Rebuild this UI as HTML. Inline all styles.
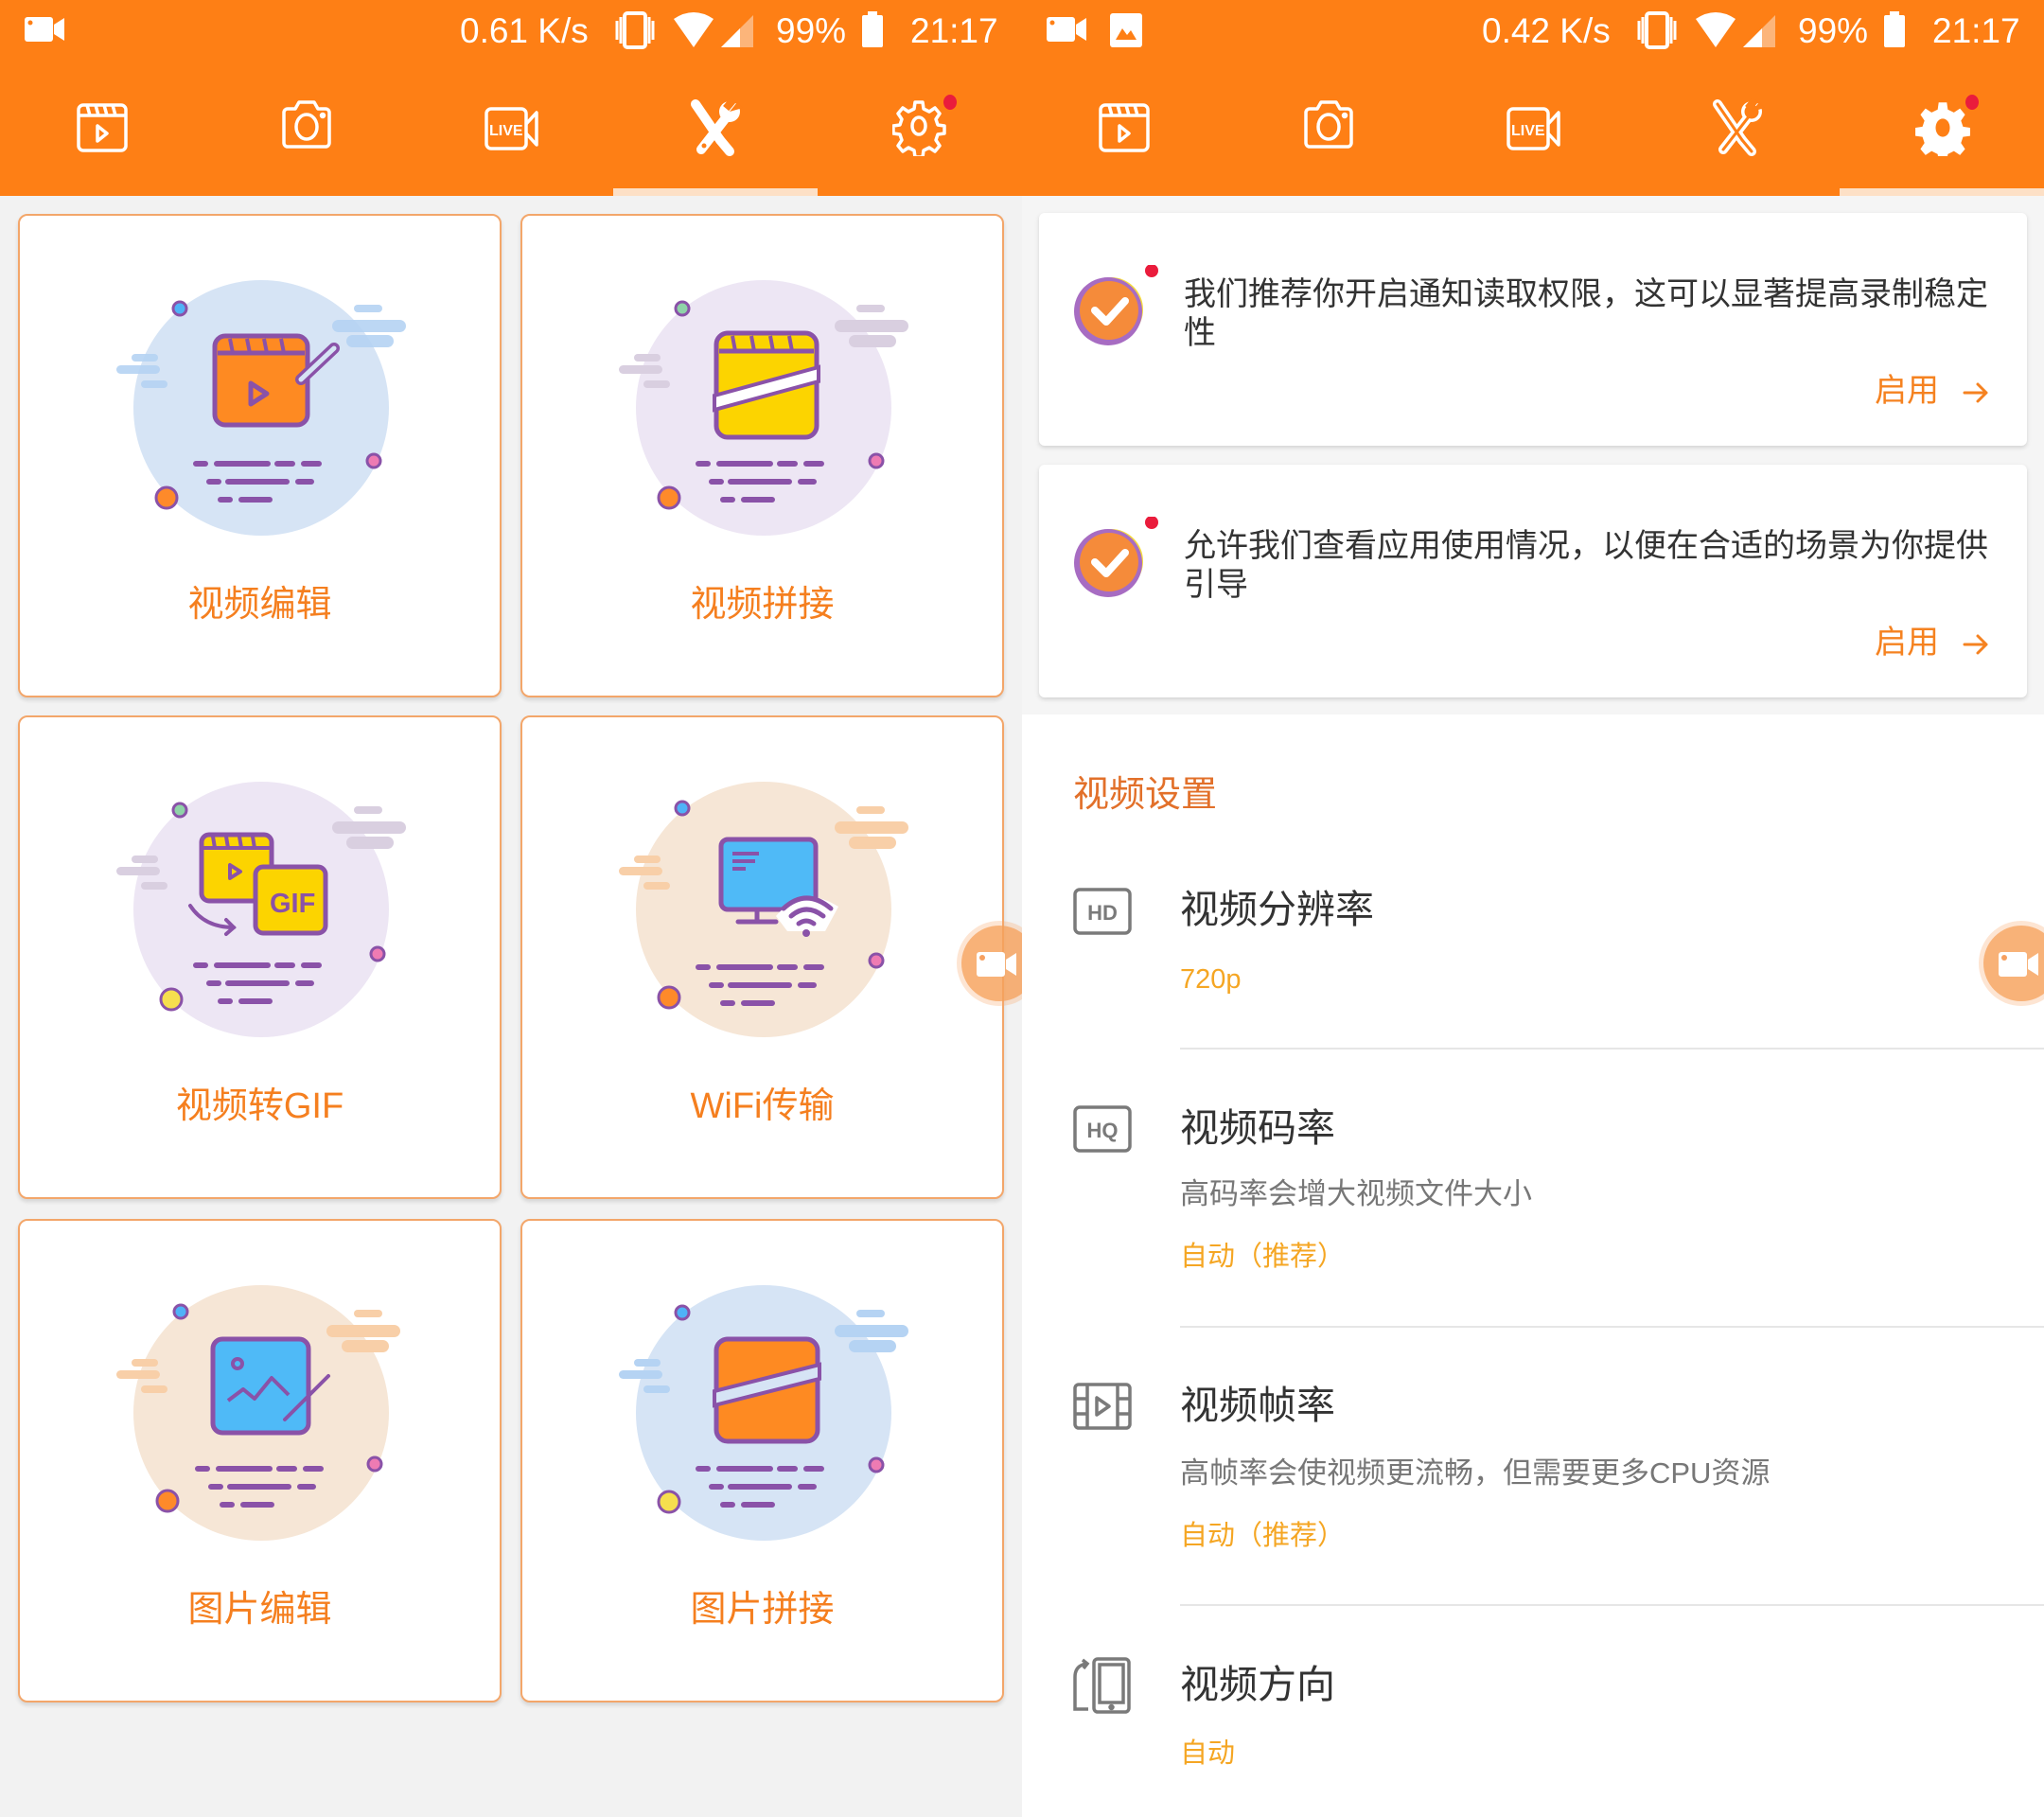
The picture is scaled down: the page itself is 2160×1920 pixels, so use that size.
<!DOCTYPE html>
<html><head><meta charset="utf-8">
<style>
*{margin:0;padding:0;box-sizing:border-box}
body{width:2160px;height:1920px;position:relative;overflow:hidden;background:#f2f2f2;font-family:"Liberation Sans","Noto Sans CJK SC",sans-serif}
.abs{position:absolute}
.hdr{position:absolute;top:0;height:207px;background:#fe7f15;width:1080px}
.st{position:absolute;top:10px;color:#fff;font-size:37px;line-height:46px;white-space:nowrap}
.ind{position:absolute;top:199px;height:8px;width:216px;background:#fde0c6}
.card{position:absolute;width:511px;height:511px;background:#fff;border:2px solid #f3a66a;border-radius:10px;box-shadow:0 3px 4px rgba(0,0,0,.12)}
.card svg{position:absolute;left:0;top:0}
.lbl{position:absolute;left:0;right:0;top:386px;text-align:center;color:#f57f1f;font-size:38px;line-height:50px}
.pc{position:absolute;left:1098px;width:1044px;height:246px;background:#fff;border-radius:6px;box-shadow:0 2px 5px rgba(0,0,0,.15)}
.pt{position:absolute;left:153px;top:66px;width:870px;color:#333;font-size:34px;line-height:41px}
.en{position:absolute;left:883px;top:166px;color:#f58220;font-size:34px;line-height:44px}
.ttl{position:absolute;left:1247px;color:#333;font-size:41px;line-height:50px}
.sub{position:absolute;left:1247px;color:#777;font-size:31px;line-height:40px}
.val{position:absolute;left:1247px;color:#f5a623;font-size:29px;line-height:38px}
.dv{position:absolute;left:1247px;right:0;height:2px;background:#e6e6e6}
</style></head><body>

<div class="hdr" style="left:0"></div>
<div class="hdr" style="left:1080px"></div>

<svg class="abs" style="left:26px;top:16px" width="44" height="30" viewBox="0 0 44 30"><rect x="0" y="2" width="30" height="26" rx="3" fill="#fff"/><path d="M31 10 L42 3 V27 L31 20Z" fill="#fff"/><circle cx="6" cy="8" r="2.5" fill="#fe7f15"/></svg>
<div class="st" style="left:486px">0.61 K/s</div>
<svg class="abs" style="left:648px;top:12px" width="50" height="40" viewBox="0 0 50 40"><rect x="12" y="2" width="22" height="36" rx="3" fill="none" stroke="#fff" stroke-width="4"/><path d="M4 10v20M8 6v28M38 6v28M42 10v20" stroke="#fff" stroke-width="3"/></svg>
<svg class="abs" style="left:710px;top:12px" width="90" height="40" viewBox="0 0 90 40"><path d="M2 8 Q23 -6 44 8 L23 38Z" fill="#fff"/><path d="M52 38 L86 4 V38Z" fill="#fcb57a"/><path d="M52 38 L72 18 V38Z" fill="#fff"/></svg>
<div class="st" style="left:820px">99%</div>
<svg class="abs" style="left:910px;top:12px" width="24" height="38" viewBox="0 0 24 38"><rect x="7" y="0" width="10" height="4" fill="#fff"/><rect x="1" y="4" width="22" height="34" rx="2" fill="#fff"/></svg>
<div class="st" style="left:962px">21:17</div>

<svg class="abs" style="left:1106px;top:16px" width="44" height="30" viewBox="0 0 44 30"><rect x="0" y="2" width="30" height="26" rx="3" fill="#fff"/><path d="M31 10 L42 3 V27 L31 20Z" fill="#fff"/><circle cx="6" cy="8" r="2.5" fill="#fe7f15"/></svg>
<svg class="abs" style="left:1173px;top:14px" width="34" height="36" viewBox="0 0 34 36"><rect x="0" y="0" width="34" height="36" rx="3" fill="#fff"/><path d="M6 28 L13 16 L18 23 L22 18 L28 28Z" fill="#fe7f15"/></svg>
<div class="st" style="left:1566px">0.42 K/s</div>
<svg class="abs" style="left:1728px;top:12px" width="50" height="40" viewBox="0 0 50 40"><rect x="12" y="2" width="22" height="36" rx="3" fill="none" stroke="#fff" stroke-width="4"/><path d="M4 10v20M8 6v28M38 6v28M42 10v20" stroke="#fff" stroke-width="3"/></svg>
<svg class="abs" style="left:1790px;top:12px" width="90" height="40" viewBox="0 0 90 40"><path d="M2 8 Q23 -6 44 8 L23 38Z" fill="#fff"/><path d="M52 38 L86 4 V38Z" fill="#fcb57a"/><path d="M52 38 L72 18 V38Z" fill="#fff"/></svg>
<div class="st" style="left:1900px">99%</div>
<svg class="abs" style="left:1990px;top:12px" width="24" height="38" viewBox="0 0 24 38"><rect x="7" y="0" width="10" height="4" fill="#fff"/><rect x="1" y="4" width="22" height="34" rx="2" fill="#fff"/></svg>
<div class="st" style="left:2042px">21:17</div>

<svg width="0" height="0" style="position:absolute">
<defs>
<g id="ifilm" fill="none" stroke="#fff" stroke-width="3.5" stroke-linejoin="round"><rect x="3" y="4" width="50" height="48" rx="5"/><path d="M3 15H53M12 4l3 11M21 4l3 11M30 4l3 11M39 4l3 11"/><path d="M23 26v16l10-8z"/></g>
<g id="icam" fill="none" stroke="#fff" stroke-width="3.5" stroke-linejoin="round"><path d="M4 16a4 4 0 0 1 4-4h8l4-7h16l4 7h8a4 4 0 0 1 4 4v32a4 4 0 0 1-4 4H8a4 4 0 0 1-4-4z"/><ellipse cx="28" cy="31" rx="11" ry="13"/><circle cx="45" cy="19" r="1.5" fill="#fff"/></g>
<g id="ilive" fill="none" stroke="#fff" stroke-width="3.5" stroke-linejoin="round"><rect x="2" y="8" width="42" height="42" rx="5"/><path d="M44 24L55 12V46L44 34"/><text x="5" y="36" font-family="Liberation Sans" font-weight="bold" font-size="16" fill="#fff" stroke="none">LIVE</text></g>
<g id="igear" fill="none" stroke="#fff" stroke-width="3.5" stroke-linejoin="round"><path d="M24 3h8l1 7 6 3 6-4 5 6-4 6 2 6 7 1v8l-7 1-2 6 4 6-5 6-6-4-6 3-1 7h-8l-1-7-6-3-6 4-5-6 4-6-2-6-7-1v-8l7-1 2-6-4-6 5-6 6 4 6-3z"/><ellipse cx="28" cy="28" rx="7" ry="9"/></g>
<g id="wrfill">
<path d="M8 6 L34 44" stroke-width="10" stroke-linecap="round"/>
<path d="M34 44 L44 56" stroke-width="10" stroke-linecap="round"/>
<path d="M42 18 L14 54" stroke-width="10" stroke-linecap="round"/>
<circle cx="44" cy="14" r="11" stroke="none"/>
</g>
</defs></svg>
<svg class="abs" style="left:80px;top:107px" width="56" height="56"><use href="#ifilm"/></svg>
<svg class="abs" style="left:296px;top:103px" width="56" height="56"><use href="#icam"/></svg>
<svg class="abs" style="left:512px;top:107px" width="58" height="56"><use href="#ilive"/></svg>
<svg class="abs" style="left:727px;top:104px" width="60" height="62" viewBox="0 0 60 62">
<g stroke="#fff" fill="#fff"><use href="#wrfill"/></g>
<path d="M44 14 L52 4 L58 10 Z" fill="#fe7f15"/><rect x="40" y="0" width="8" height="12" fill="#fe7f15" transform="rotate(40 44 6)"/>
<circle cx="17" cy="50" r="2.5" fill="#fe7f15"/></svg>
<svg class="abs" style="left:943px;top:105px" width="60" height="60"><use href="#igear"/></svg>
<div class="abs" style="left:997px;top:100px;width:14px;height:16px;border-radius:50%;background:#ea1c3c"></div>

<svg class="abs" style="left:1160px;top:107px" width="56" height="56"><use href="#ifilm"/></svg>
<svg class="abs" style="left:1376px;top:103px" width="56" height="56"><use href="#icam"/></svg>
<svg class="abs" style="left:1592px;top:107px" width="58" height="56"><use href="#ilive"/></svg>
<svg class="abs" style="left:1807px;top:104px" width="60" height="62" viewBox="0 0 60 62">
<g stroke="#fff" fill="#fff"><use href="#wrfill"/></g>
<g transform="translate(0,0)"><path d="M8 6 L34 44" stroke="#fe7f15" stroke-width="3" stroke-linecap="round"/><path d="M34 44 L44 56" stroke="#fe7f15" stroke-width="3" stroke-linecap="round"/><path d="M42 18 L14 54" stroke="#fe7f15" stroke-width="3" stroke-linecap="round"/><circle cx="44" cy="14" r="7.5" fill="#fe7f15"/></g>
<path d="M44 14 L52 4 L58 10 Z" fill="#fe7f15"/><rect x="40" y="0" width="8" height="12" fill="#fe7f15" transform="rotate(40 44 6)"/>
</svg>
<svg class="abs" style="left:2023px;top:105px" width="60" height="60" viewBox="0 0 56 56"><path d="M24 3h8l1 7 6 3 6-4 5 6-4 6 2 6 7 1v8l-7 1-2 6 4 6-5 6-6-4-6 3-1 7h-8l-1-7-6-3-6 4-5-6 4-6-2-6-7-1v-8l7-1 2-6-4-6 5-6 6 4 6-3z" fill="#fff"/><ellipse cx="28" cy="28" rx="7" ry="9" fill="#fe7f15"/></svg>
<div class="abs" style="left:2077px;top:100px;width:14px;height:16px;border-radius:50%;background:#ea1c3c"></div>

<div class="ind" style="left:648px"></div>
<div class="ind" style="left:1944px"></div>

<svg width="0" height="0" style="position:absolute"><defs>
<g id="lines" stroke="#8a52a8" stroke-width="6" stroke-linecap="round">
<path d="M186 262h10M208 262h54M272 262h16M300 262h16M200 281h10M220 281h62M294 281h14M212 300h10M234 300h30"/>
</g>
</defs></svg>

<div class="card" style="left:19px;top:226px">
<svg width="511" height="380" viewBox="0 0 511 380">
<circle cx="255" cy="203" r="135" fill="#d6e4f5"/>
<g fill="#b5d3f3" opacity=".9"><rect x="353" y="94" width="30" height="8" rx="4"/><rect x="330" y="110" width="78" height="13" rx="6.5"/><rect x="345" y="126" width="50" height="13" rx="6.5"/><rect x="118" y="146" width="28" height="8" rx="4"/><rect x="102" y="158" width="46" height="9" rx="4.5"/><rect x="128" y="174" width="28" height="8" rx="4"/></g>
<g stroke="#8a52a8" stroke-width="3"><circle cx="169" cy="98" r="7" fill="#4fb2f7"/><circle cx="155" cy="298" r="11" fill="#fe8a2a"/><circle cx="374" cy="259" r="7" fill="#ee7bb3"/></g>
<use href="#lines"/>
<rect x="206" y="127" width="98" height="94" rx="11" fill="#fe8a22" stroke="#8a52a8" stroke-width="5"/>
<path d="M209 145h92" stroke="#8a52a8" stroke-width="5"/><path d="M222 130l3 15M240 130l3 15M258 130l3 15M276 130l3 15" stroke="#8a52a8" stroke-width="4"/>
<path d="M244 177v22l17-11z" fill="none" stroke="#8a52a8" stroke-width="5" stroke-linejoin="round"/>
<path d="M297 173 L332 140" stroke="#8a52a8" stroke-width="12" stroke-linecap="round"/>
<path d="M297 173 L332 140" stroke="#d6e4f5" stroke-width="5" stroke-linecap="round"/>
</svg>
<div class="lbl">视频编辑</div></div>

<div class="card" style="left:550px;top:226px">
<svg width="511" height="380" viewBox="0 0 511 380">
<circle cx="255" cy="203" r="135" fill="#ede6f4"/>
<g fill="#d9cfe0"><rect x="353" y="94" width="30" height="8" rx="4"/><rect x="330" y="110" width="78" height="13" rx="6.5"/><rect x="345" y="126" width="50" height="13" rx="6.5"/><rect x="118" y="146" width="28" height="8" rx="4"/><rect x="102" y="158" width="46" height="9" rx="4.5"/><rect x="128" y="174" width="28" height="8" rx="4"/></g>
<g stroke="#8a52a8" stroke-width="3"><circle cx="169" cy="98" r="7" fill="#8fd3a8"/><circle cx="155" cy="298" r="11" fill="#fe8a2a"/><circle cx="374" cy="259" r="7" fill="#ee7bb3"/></g>
<use href="#lines"/>
<rect x="205" y="124" width="106" height="110" rx="12" fill="#fcd400" stroke="#8a52a8" stroke-width="5"/>
<path d="M208 143h100" stroke="#8a52a8" stroke-width="5"/><path d="M222 127l3 16M242 127l3 16M262 127l3 16M282 127l3 16" stroke="#8a52a8" stroke-width="4"/>
<path d="M203 190 L313 160 L313 175 L203 205Z" fill="#fff" stroke="#8a52a8" stroke-width="4"/>
</svg>
<div class="lbl">视频拼接</div></div>

<div class="card" style="left:19px;top:756px">
<svg width="511" height="380" viewBox="0 0 511 380">
<circle cx="255" cy="203" r="135" fill="#ede6f4"/>
<g fill="#d9cfe0"><rect x="353" y="94" width="30" height="8" rx="4"/><rect x="330" y="110" width="78" height="13" rx="6.5"/><rect x="345" y="126" width="50" height="13" rx="6.5"/><rect x="118" y="146" width="28" height="8" rx="4"/><rect x="102" y="158" width="46" height="9" rx="4.5"/><rect x="128" y="174" width="28" height="8" rx="4"/></g>
<g stroke="#8a52a8" stroke-width="3"><circle cx="169" cy="98" r="7" fill="#8fd3a8"/><circle cx="160" cy="298" r="11" fill="#f6df4e"/><circle cx="378" cy="250" r="7" fill="#ee7bb3"/></g>
<use href="#lines"/>
<rect x="192" y="124" width="74" height="70" rx="8" fill="#fcd400" stroke="#8a52a8" stroke-width="5"/>
<path d="M194 138h70M204 126l2 12M218 126l2 12M232 126l2 12M246 126l2 12" stroke="#8a52a8" stroke-width="4"/>
<path d="M222 156v14l11-7z" fill="none" stroke="#8a52a8" stroke-width="4" stroke-linejoin="round"/>
<rect x="249" y="158" width="74" height="70" rx="8" fill="#fcd400" stroke="#8a52a8" stroke-width="5"/>
<text x="264" y="206" font-family="Liberation Sans" font-weight="bold" font-size="29" fill="#8a52a8">GIF</text>
<path d="M180 199 Q195 222 226 222" fill="none" stroke="#8a52a8" stroke-width="4" stroke-linecap="round"/><path d="M218 214l8 8-8 7" fill="none" stroke="#8a52a8" stroke-width="4" stroke-linecap="round"/>
</svg>
<div class="lbl">视频转GIF</div></div>

<div class="card" style="left:550px;top:756px">
<svg width="511" height="380" viewBox="0 0 511 380">
<circle cx="255" cy="203" r="135" fill="#f6e6d6"/>
<g fill="#f8cfa8"><rect x="353" y="94" width="30" height="8" rx="4"/><rect x="330" y="110" width="78" height="13" rx="6.5"/><rect x="345" y="126" width="50" height="13" rx="6.5"/><rect x="118" y="146" width="28" height="8" rx="4"/><rect x="102" y="158" width="46" height="9" rx="4.5"/><rect x="128" y="174" width="28" height="8" rx="4"/></g>
<g stroke="#8a52a8" stroke-width="3"><circle cx="169" cy="96" r="7" fill="#4fb2f7"/><circle cx="155" cy="296" r="11" fill="#fe8a2a"/><circle cx="374" cy="257" r="7" fill="#ee7bb3"/></g>
<use href="#lines" transform="translate(0,2)"/>
<rect x="210" y="129" width="100" height="74" rx="7" fill="#4fbaf7" stroke="#8a52a8" stroke-width="5"/>
<path d="M222 144h28M222 152h24M222 160h14" stroke="#8a52a8" stroke-width="4"/>
<path d="M248 203v12M228 216h40" stroke="#8a52a8" stroke-width="5" stroke-linecap="round"/>
<path d="M268 210 Q296 176 334 200 L320 226 L280 226Z" fill="#fff" stroke="none"/>
<path d="M276 202 Q300 180 326 202M284 210 Q300 196 318 210M292 218 Q300 212 308 218" fill="none" stroke="#8a52a8" stroke-width="5" stroke-linecap="round"/>
<circle cx="300" cy="228" r="4" fill="#8a52a8"/>
</svg>
<div class="lbl">WiFi传输</div></div>

<div class="card" style="left:19px;top:1288px">
<svg width="511" height="380" viewBox="0 0 511 380">
<circle cx="255" cy="203" r="135" fill="#f6e6d6"/>
<g fill="#f8cfa8"><rect x="353" y="94" width="30" height="8" rx="4"/><rect x="324" y="110" width="78" height="13" rx="6.5"/><rect x="340" y="126" width="50" height="13" rx="6.5"/><rect x="118" y="146" width="28" height="8" rx="4"/><rect x="102" y="158" width="46" height="9" rx="4.5"/><rect x="128" y="174" width="28" height="8" rx="4"/></g>
<g stroke="#8a52a8" stroke-width="3"><circle cx="170" cy="96" r="7" fill="#4fb2f7"/><circle cx="156" cy="296" r="11" fill="#fe8a2a"/><circle cx="375" cy="257" r="7" fill="#ee7bb3"/></g>
<use href="#lines" transform="translate(2,0)"/>
<rect x="204" y="125" width="101" height="99" rx="10" fill="#4fbaf7" stroke="#8a52a8" stroke-width="5"/>
<circle cx="230" cy="151" r="5" fill="none" stroke="#8a52a8" stroke-width="4"/>
<path d="M220 190l16-12 12 10 18-22 18 18" fill="none" stroke="#8a52a8" stroke-width="4" stroke-linejoin="round"/>
<path d="M280 210 L326 164" stroke="#8a52a8" stroke-width="4" stroke-linecap="round"/>
</svg>
<div class="lbl">图片编辑</div></div>

<div class="card" style="left:550px;top:1288px">
<svg width="511" height="380" viewBox="0 0 511 380">
<circle cx="255" cy="203" r="135" fill="#d6e4f5"/>
<g fill="#b5d3f3"><rect x="353" y="94" width="30" height="8" rx="4"/><rect x="330" y="110" width="78" height="13" rx="6.5"/><rect x="345" y="126" width="50" height="13" rx="6.5"/><rect x="118" y="146" width="28" height="8" rx="4"/><rect x="102" y="158" width="46" height="9" rx="4.5"/><rect x="128" y="174" width="28" height="8" rx="4"/></g>
<g stroke="#8a52a8" stroke-width="3"><circle cx="169" cy="97" r="7" fill="#4fb2f7"/><circle cx="155" cy="297" r="11" fill="#f6df4e"/><circle cx="374" cy="258" r="7" fill="#ee7bb3"/></g>
<use href="#lines"/>
<rect x="205" y="125" width="107" height="108" rx="12" fill="#fe8a22" stroke="#8a52a8" stroke-width="5"/>
<path d="M203 180 L314 152 L314 167 L203 195Z" fill="#d6e4f5" stroke="#8a52a8" stroke-width="4"/>
</svg>
<div class="lbl">图片拼接</div></div>

<div class="abs" style="left:1011px;top:973px;width:90px;height:90px;border-radius:50%;background:rgba(247,170,110,.3)"></div>
<div class="abs" style="left:1016px;top:978px;width:80px;height:80px;border-radius:50%;background:rgba(246,160,90,.75)"></div>
<svg class="abs" style="left:1032px;top:1004px" width="60" height="30" viewBox="0 0 60 30"><rect x="0" y="2" width="30" height="26" rx="3" fill="#fff"/><path d="M31 10 L42 3 V27 L31 20Z" fill="#fff"/><circle cx="6" cy="8" r="3" fill="#f6a060"/></svg>

<div class="abs" style="left:1080px;top:207px;width:1080px;height:548px;background:#f5f5f5"></div>
<div class="abs" style="left:1080px;top:755px;width:1080px;height:1165px;background:#fff"></div>

<div class="pc" style="top:225px">
<svg class="abs" style="left:30px;top:55px" width="100" height="90" viewBox="0 0 100 90"><circle cx="46" cy="47" r="34" fill="#f6dc3c"/><circle cx="43" cy="49" r="36" fill="#a76cc2"/><circle cx="44" cy="48" r="31" fill="#f58b3a"/><path d="M29 48l12 12 20-22" fill="none" stroke="#fff" stroke-width="8" stroke-linecap="round" stroke-linejoin="round"/><circle cx="89" cy="6" r="7" fill="#ea1c3c"/></svg>
<div class="pt">我们推荐你开启通知读取权限，这可以显著提高录制稳定性</div>
<div class="en">启用</div>
<svg class="abs" style="left:975px;top:175px" width="30" height="30" viewBox="0 0 30 30"><path d="M3 15H26M17 6l9 9-9 9" fill="none" stroke="#f58220" stroke-width="3" stroke-linecap="round" stroke-linejoin="round"/></svg>
</div>
<div class="pc" style="top:491px">
<svg class="abs" style="left:30px;top:55px" width="100" height="90" viewBox="0 0 100 90"><circle cx="46" cy="47" r="34" fill="#f6dc3c"/><circle cx="43" cy="49" r="36" fill="#a76cc2"/><circle cx="44" cy="48" r="31" fill="#f58b3a"/><path d="M29 48l12 12 20-22" fill="none" stroke="#fff" stroke-width="8" stroke-linecap="round" stroke-linejoin="round"/><circle cx="89" cy="6" r="7" fill="#ea1c3c"/></svg>
<div class="pt">允许我们查看应用使用情况，以便在合适的场景为你提供引导</div>
<div class="en">启用</div>
<svg class="abs" style="left:975px;top:175px" width="30" height="30" viewBox="0 0 30 30"><path d="M3 15H26M17 6l9 9-9 9" fill="none" stroke="#f58220" stroke-width="3" stroke-linecap="round" stroke-linejoin="round"/></svg>
</div>

<div class="abs" style="left:1134px;top:815px;color:#e2702a;font-size:38px;line-height:50px">视频设置</div>

<svg class="abs" style="left:1134px;top:938px" width="62" height="50" viewBox="0 0 62 50"><rect x="2" y="2" width="58" height="46" rx="5" fill="none" stroke="#7a7a7a" stroke-width="3.5"/><text x="31" y="34" text-anchor="middle" font-family="Liberation Sans" font-weight="bold" font-size="22" fill="#7a7a7a">HD</text></svg>
<div class="ttl" style="top:936px">视频分辨率</div>
<div class="val" style="top:1016px">720p</div>
<div class="dv" style="top:1107px"></div>

<svg class="abs" style="left:1134px;top:1168px" width="62" height="50" viewBox="0 0 62 50"><rect x="2" y="2" width="58" height="46" rx="5" fill="none" stroke="#7a7a7a" stroke-width="3.5"/><text x="31" y="34" text-anchor="middle" font-family="Liberation Sans" font-weight="bold" font-size="22" fill="#7a7a7a">HQ</text></svg>
<div class="ttl" style="top:1167px">视频码率</div>
<div class="sub" style="top:1242px">高码率会增大视频文件大小</div>
<div class="val" style="top:1309px">自动（推荐）</div>
<div class="dv" style="top:1401px"></div>

<svg class="abs" style="left:1134px;top:1461px" width="62" height="50" viewBox="0 0 62 50" fill="none" stroke="#7a7a7a" stroke-width="3.5"><rect x="2" y="2" width="58" height="46" rx="4"/><path d="M15 2v46M47 2v46M2 17h13M2 33h13M47 17h13M47 33h13"/><path d="M25 16v18l13-9z" stroke-linejoin="round"/></svg>
<div class="ttl" style="top:1460px">视频帧率</div>
<div class="sub" style="top:1537px">高帧率会使视频更流畅，但需要更多CPU资源</div>
<div class="val" style="top:1604px">自动（推荐）</div>
<div class="dv" style="top:1695px"></div>

<svg class="abs" style="left:1132px;top:1750px" width="64" height="62" viewBox="0 0 64 62" fill="none" stroke="#7a7a7a" stroke-width="3.5"><rect x="24" y="3" width="37" height="56" rx="4"/><rect x="30" y="9" width="25" height="40"/><circle cx="42.5" cy="54" r="1.5" fill="#7a7a7a"/><path d="M16 8 Q4 10 4 22 V56 H18"/><path d="M12 4l5 4-4 5"/></svg>
<div class="ttl" style="top:1755px">视频方向</div>
<div class="val" style="top:1834px">自动</div>

<div class="abs" style="left:2091px;top:973px;width:90px;height:90px;border-radius:50%;background:rgba(247,170,110,.3)"></div>
<div class="abs" style="left:2096px;top:978px;width:80px;height:80px;border-radius:50%;background:rgba(246,160,90,.75)"></div>
<svg class="abs" style="left:2112px;top:1004px" width="60" height="30" viewBox="0 0 60 30"><rect x="0" y="2" width="30" height="26" rx="3" fill="#fff"/><path d="M31 10 L42 3 V27 L31 20Z" fill="#fff"/><circle cx="6" cy="8" r="3" fill="#f6a060"/></svg>

</body></html>
